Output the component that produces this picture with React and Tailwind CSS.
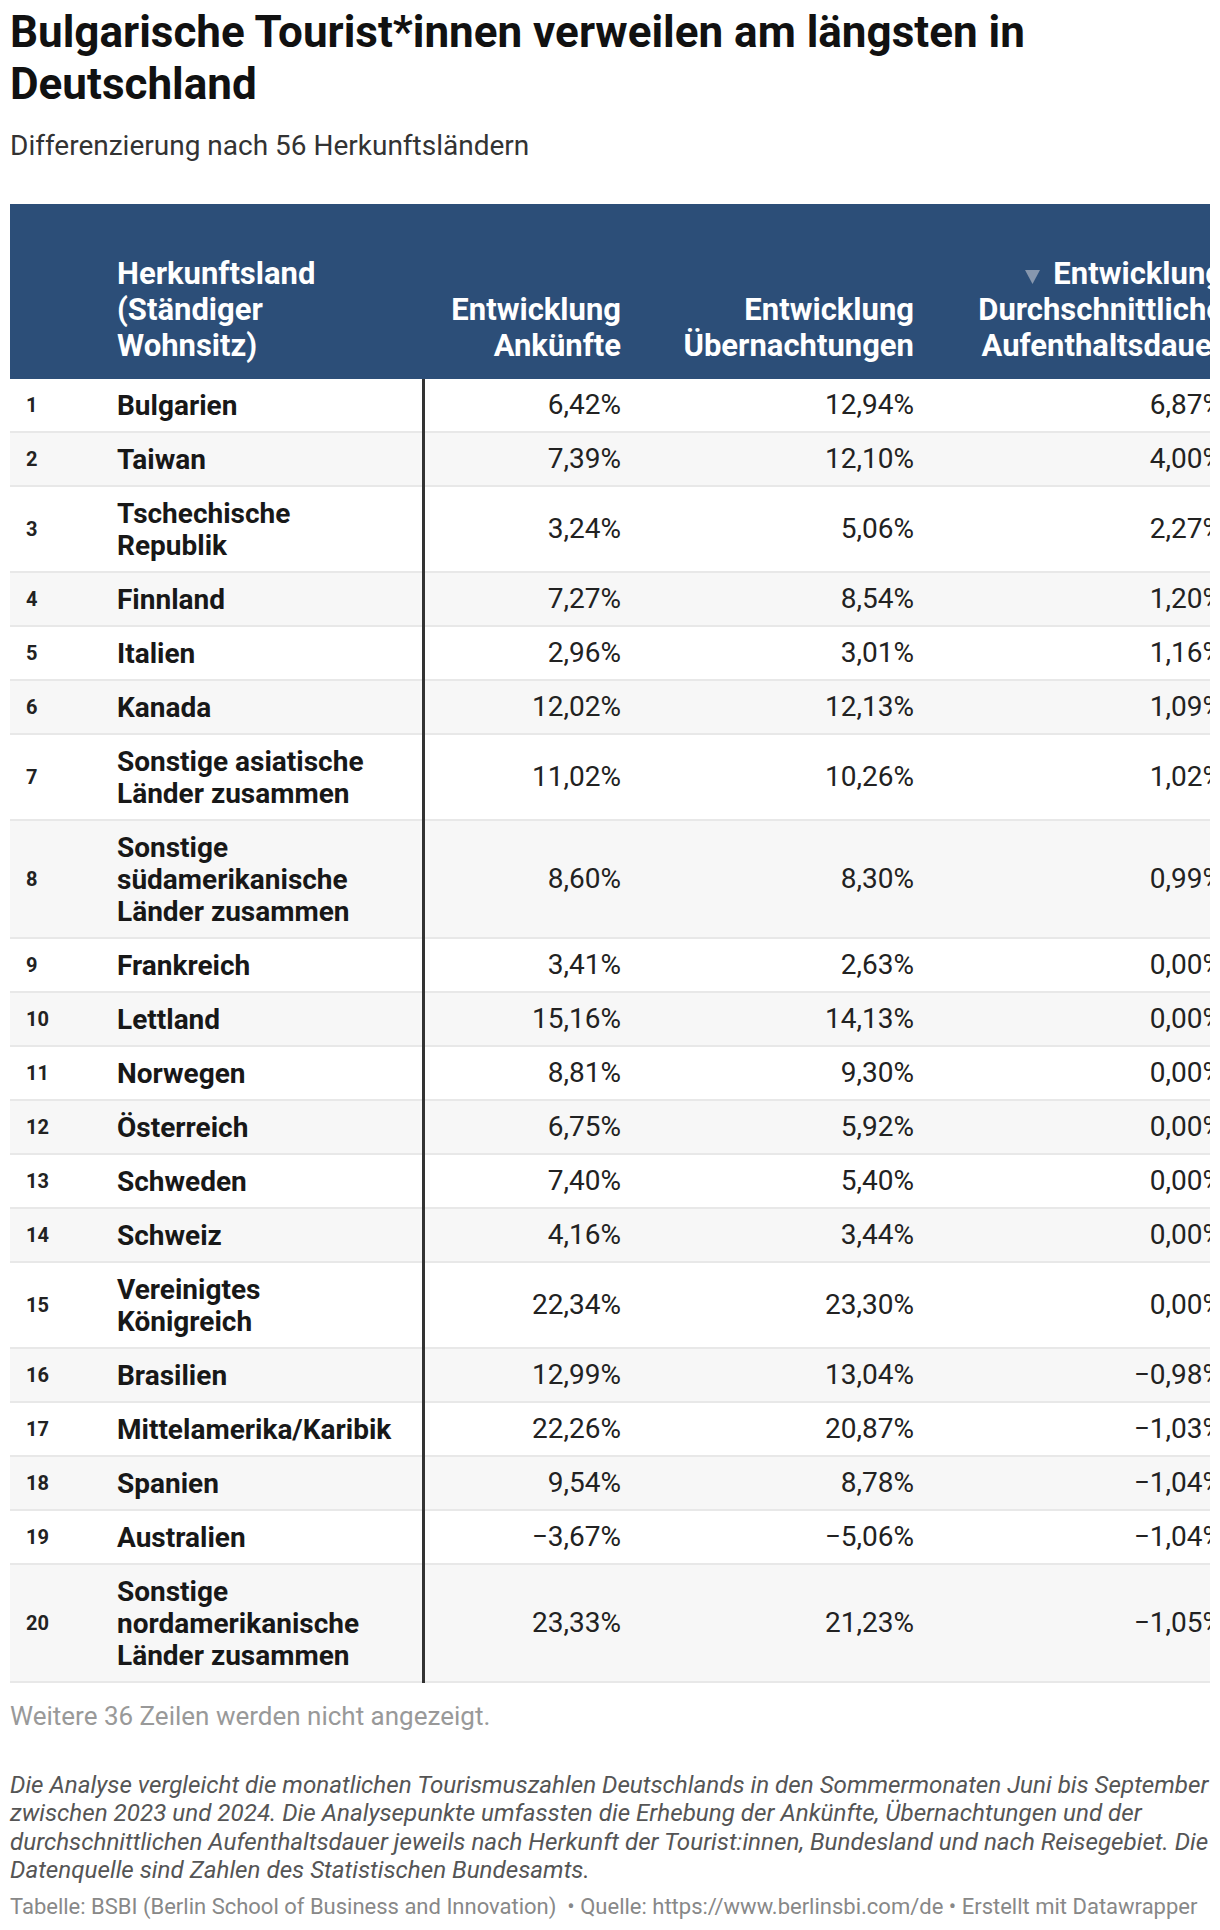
import React from "react";

const rows = [
  [1, ["Bulgarien"], "6,42%", "12,94%", "6,87%"],
  [2, ["Taiwan"], "7,39%", "12,10%", "4,00%"],
  [3, ["Tschechische", "Republik"], "3,24%", "5,06%", "2,27%"],
  [4, ["Finnland"], "7,27%", "8,54%", "1,20%"],
  [5, ["Italien"], "2,96%", "3,01%", "1,16%"],
  [6, ["Kanada"], "12,02%", "12,13%", "1,09%"],
  [7, ["Sonstige asiatische", "Länder zusammen"], "11,02%", "10,26%", "1,02%"],
  [8, ["Sonstige", "südamerikanische", "Länder zusammen"], "8,60%", "8,30%", "0,99%"],
  [9, ["Frankreich"], "3,41%", "2,63%", "0,00%"],
  [10, ["Lettland"], "15,16%", "14,13%", "0,00%"],
  [11, ["Norwegen"], "8,81%", "9,30%", "0,00%"],
  [12, ["Österreich"], "6,75%", "5,92%", "0,00%"],
  [13, ["Schweden"], "7,40%", "5,40%", "0,00%"],
  [14, ["Schweiz"], "4,16%", "3,44%", "0,00%"],
  [15, ["Vereinigtes", "Königreich"], "22,34%", "23,30%", "0,00%"],
  [16, ["Brasilien"], "12,99%", "13,04%", "−0,98%"],
  [17, ["Mittelamerika/Karibik"], "22,26%", "20,87%", "−1,03%"],
  [18, ["Spanien"], "9,54%", "8,78%", "−1,04%"],
  [19, ["Australien"], "−3,67%", "−5,06%", "−1,04%"],
  [20, ["Sonstige", "nordamerikanische", "Länder zusammen"], "23,33%", "21,23%", "−1,05%"],
];

const cols = "grid grid-cols-[107px_308px_196px_293px_309px_40px]";

export default function App() {
  return (
    <div className="w-[1220px] bg-white px-[10px] pb-[8px] text-[#181818]" style={{ fontFamily: "Roboto, 'Noto Sans', Arial, sans-serif" }}>
      <h1 className="pt-[6px] text-[44px] font-bold leading-[52px] text-[#111]">
        Bulgarische Tourist*innen verweilen am längsten in Deutschland
      </h1>
      <p className="mt-[18px] text-[28px] leading-[36px] text-[#333]">Differenzierung nach 56 Herkunftsländern</p>

      <div className="mt-[40px] w-[1200px] overflow-hidden">
        <div className="w-[1258px]">
          <div className={`${cols} h-[175px] bg-[#2c4e78] text-[31px] font-bold leading-[36px] text-white`}>
            <div />
            <div className="flex items-end pb-[15px]">
              <div className="whitespace-nowrap">
                Herkunftsland
                <br />
                (Ständiger
                <br />
                Wohnsitz)
              </div>
            </div>
            <div className="flex items-end justify-end pb-[15px] text-right">
              <div className="whitespace-nowrap">
                Entwicklung
                <br />
                Ankünfte
              </div>
            </div>
            <div className="flex items-end justify-end pb-[15px] text-right">
              <div className="whitespace-nowrap">
                Entwicklung
                <br />
                Übernachtungen
              </div>
            </div>
            <div className="flex items-end justify-end pb-[15px] text-right">
              <div className="whitespace-nowrap">
                <svg className="mr-[13px] inline-block align-baseline" width="15" height="14" viewBox="0 0 15 14">
                  <path d="M0 0 H15 L7.5 14 Z" fill="#8797ae" />
                </svg>
                Entwicklung
                <br />
                Durchschnittliche
                <br />
                Aufenthaltsdauer
              </div>
            </div>
            <div />
          </div>

          {rows.map(([rank, name, a, b, c], i) => (
            <div
              key={rank}
              className={`${cols} border-b-2 border-[#e8e8e8] ${i % 2 === 1 ? "bg-[#f7f7f7]" : "bg-white"}`}
            >
              <div className="flex items-center pl-[16px] text-[20px] font-bold text-[#222]">{rank}</div>
              <div className="-mb-[2px] border-r-[3px] border-[#333] py-[11px] text-[28px] font-bold leading-[32px] whitespace-nowrap text-[#181818]">
                {name.map((n, k) => (
                  <div key={k}>{n}</div>
                ))}
              </div>
              <div className="flex items-center justify-end text-[28px] leading-[32px] text-[#222]">{a}</div>
              <div className="flex items-center justify-end text-[28px] leading-[32px] text-[#222]">{b}</div>
              <div className="flex items-center justify-end text-[28px] leading-[32px] text-[#222]">{c}</div>
              <div />
            </div>
          ))}
        </div>
      </div>

      <p className="mt-[17px] text-[26px] leading-[32px] text-[#999]">Weitere 36 Zeilen werden nicht angezeigt.</p>

      <p className="mt-[39px] whitespace-nowrap text-[24.2px] italic leading-[28.3px] text-[#555]">
        Die Analyse vergleicht die monatlichen Tourismuszahlen Deutschlands in den Sommermonaten Juni bis September
        <br />
        zwischen 2023 und 2024. Die Analysepunkte umfassten die Erhebung der Ankünfte, Übernachtungen und der
        <br />
        durchschnittlichen Aufenthaltsdauer jeweils nach Herkunft der Tourist:innen, Bundesland und nach Reisegebiet. Die
        <br />
        Datenquelle sind Zahlen des Statistischen Bundesamts.
      </p>
      <p className="mt-[9px] whitespace-nowrap text-[22px] leading-[28px] text-[#888]">
        Tabelle: BSBI (Berlin School of Business and Innovation) &nbsp;• Quelle: https://www.berlinsbi.com/de • Erstellt mit Datawrapper
      </p>
    </div>
  );
}
